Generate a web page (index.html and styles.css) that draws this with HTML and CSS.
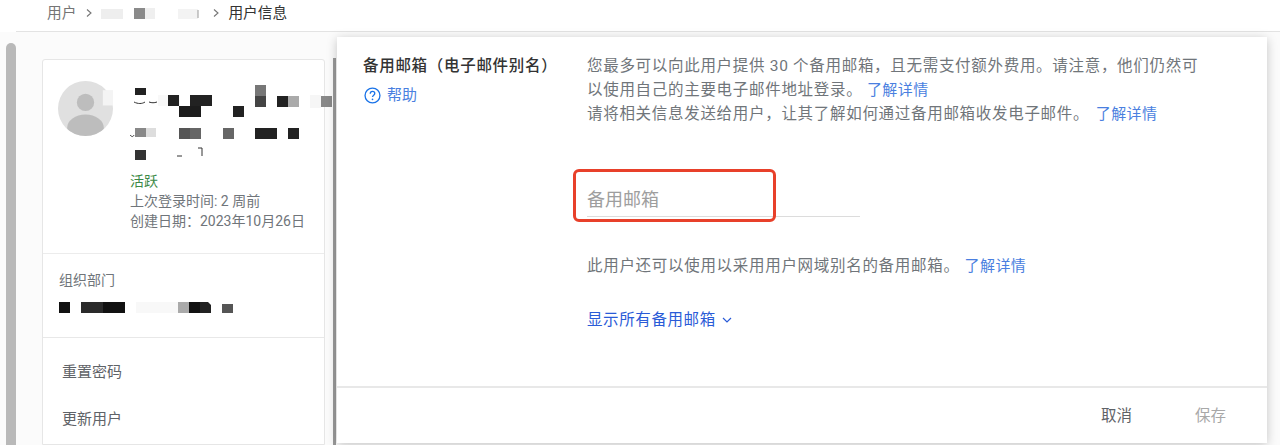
FILE: index.html
```html
<!DOCTYPE html>
<html lang="zh-CN">
<head>
<meta charset="utf-8">
<title>用户信息</title>
<link rel="stylesheet" href="styles.css">
</head>
<body>
<div class="page">
  <header class="crumbs">
    <span class="crumb">用户</span>
    <svg class="sep" viewBox="0 0 8 10"><path d="M2 1.5 6 5 2 8.5" fill="none" stroke="#757575" stroke-width="1.1"/></svg>
    <svg class="crumb-mosaic" viewBox="0 0 102 14">
      <rect x="0" y="3" width="22" height="10" fill="#eeeeee"/>
      <rect x="33" y="2" width="11" height="11" fill="#8a8a8a"/>
      <rect x="44" y="2" width="10" height="11" fill="#efefef"/>
      <rect x="77" y="3" width="20" height="10" fill="#f3f3f3"/>
      <path d="M97 4v8" stroke="#999" stroke-width="1"/>
    </svg>
    <svg class="sep" viewBox="0 0 8 10"><path d="M2 1.5 6 5 2 8.5" fill="none" stroke="#757575" stroke-width="1.1"/></svg>
    <span class="crumb current">用户信息</span>
  </header>
  <div class="content">
    <div class="scrollbar"></div>
    <aside class="card">
      <section class="identity">
        <svg class="avatar" viewBox="0 0 54 54">
          <defs><clipPath id="avatar-clip"><circle cx="27" cy="27" r="27"/></clipPath></defs>
          <circle cx="27" cy="27" r="27" fill="#e0e0e0"/>
          <g clip-path="url(#avatar-clip)">
            <circle cx="27" cy="21" r="8.5" fill="#bdbdbd"/>
            <ellipse cx="27" cy="46" rx="18" ry="13" fill="#bdbdbd"/>
          </g>
          <rect x="44" y="9" width="10" height="15" fill="#f4f4f4"/>
        </svg>
        <svg class="name-mosaic" viewBox="0 0 215 75">
          <rect x="5" y="0" width="11" height="7" fill="#222"/>
          <path d="M4 14c4 2 8 2 11 0M19 14c3 1 5 1 8 0" stroke="#333" fill="none"/>
          <rect x="28" y="7" width="22" height="11" fill="#f8f8f8"/>
          <rect x="38" y="7" width="11" height="11" fill="#222"/>
          <rect x="60" y="7" width="22" height="11" fill="#222"/>
          <rect x="49" y="18" width="22" height="11" fill="#1c1c1c"/>
          <rect x="103" y="18" width="11" height="11" fill="#222"/>
          <rect x="125" y="-3" width="11" height="11" fill="#777"/>
          <rect x="125" y="8" width="11" height="11" fill="#444"/>
          <rect x="147" y="8" width="11" height="11" fill="#222"/>
          <rect x="158" y="8" width="11" height="11" fill="#aaa"/>
          <rect x="191" y="8" width="11" height="11" fill="#888"/>
          <rect x="180" y="7" width="11" height="13" fill="#f6f6f6"/>
          <rect x="5" y="40" width="11" height="9" fill="#888"/>
          <rect x="16" y="40" width="10" height="9" fill="#ddd"/>
          <rect x="49" y="40" width="11" height="11" fill="#555"/>
          <rect x="60" y="40" width="11" height="11" fill="#666"/>
          <rect x="93" y="40" width="11" height="11" fill="#666"/>
          <rect x="125" y="40" width="22" height="11" fill="#222"/>
          <rect x="158" y="40" width="11" height="11" fill="#222"/>
          <path d="M0 47c2 2 3 2 4 0" stroke="#333" fill="none"/>
          <rect x="5" y="62" width="11" height="10" fill="#333"/>
          <path d="M47 68h5M68 60h4v8" stroke="#333" fill="none"/>
        </svg>
        <div class="status">
          <div class="active">活跃</div>
          <div>上次登录时间: 2 周前</div>
          <div>创建日期：2023年10月26日</div>
        </div>
      </section>
      <section class="org">
        <div class="org-label">组织部门</div>
        <svg class="org-mosaic" viewBox="0 0 176 12">
          <rect x="0" y="0" width="11" height="11" fill="#111"/>
          <rect x="22" y="0" width="22" height="11" fill="#2a2a2a"/>
          <rect x="44" y="0" width="22" height="11" fill="#111"/>
          <rect x="77" y="0" width="42" height="11" fill="#f8f8f8"/>
          <rect x="119" y="0" width="11" height="11" fill="#aaa"/>
          <rect x="130" y="0" width="11" height="11" fill="#111"/>
          <path d="M141 0h8l3 3v8h-11z" fill="#222"/>
          <rect x="163" y="2" width="11" height="9" fill="#555"/>
        </svg>
      </section>
      <nav class="actions">
        <div class="action">重置密码</div>
        <div class="action">更新用户</div>
      </nav>
    </aside>
    <div class="side-track"></div>
  </div>
  <main class="panel">
    <div class="panel-body">
      <div class="aside-col">
        <h1 class="panel-title">备用邮箱（电子邮件别名）</h1>
        <div class="help">
          <svg class="help-icon" viewBox="0 0 18 18"><circle cx="9" cy="9" r="7.9" fill="none" stroke="#1a73e8" stroke-width="1.4"/><path d="M6.6 7.1c0-1.4 1-2.4 2.4-2.4s2.4 1 2.4 2.2c0 1.8-2.4 1.8-2.4 3.7" fill="none" stroke="#1a73e8" stroke-width="1.4"/><circle cx="9" cy="13.1" r=".9" fill="#1a73e8"/></svg>
          <span>帮助</span>
        </div>
      </div>
      <div class="main-col">
        <p class="desc">您最多可以向此用户提供 30 个备用邮箱，且无需支付额外费用。请注意，他们仍然可以使用自己的主要电子邮件地址登录。 <a class="link">了解详情</a><br>请将相关信息发送给用户，让其了解如何通过备用邮箱收发电子邮件。 <a class="link link-offset">了解详情</a></p>
        <div class="field">
          <span class="placeholder">备用邮箱</span>
          <div class="highlight"></div>
        </div>
        <p class="note">此用户还可以使用以采用用户网域别名的备用邮箱。<a class="link note-link">了解详情</a></p>
        <a class="show-all">显示所有备用邮箱
          <svg class="chev" viewBox="0 0 10 6"><path d="M1 1l4 4 4-4" fill="none" stroke="#2a5bd7" stroke-width="1.2"/></svg>
        </a>
      </div>
    </div>
    <footer class="panel-footer">
      <button class="btn">取消</button>
      <button class="btn disabled">保存</button>
    </footer>
  </main>
</div>
</body>
</html>
```

FILE: styles.css
```css
* { box-sizing: border-box; }
html, body { margin: 0; padding: 0; }
body {
  width: 1280px;
  height: 445px;
  overflow: hidden;
  background: #fff;
  font-family: Roboto, "Noto Sans CJK SC", "Liberation Sans", sans-serif;
  color: #5f6368;
}
.page { position: relative; width: 1280px; height: 445px; overflow: hidden; }

.crumbs {
  height: 32px;
  margin-left: 16px;
  padding: 0 0 5px 31px;
  display: flex;
  align-items: center;
  border-bottom: 1px solid #e3e3e3;
  font-size: 14.7px;
  line-height: 24px;
}
.crumb { color: #757575; }
.crumb.current { color: #333; }
.sep { width: 8px; height: 10px; margin: 0 8px 0 9px; flex: none; }
.crumbs .sep:nth-of-type(2) { margin: 0 8px 0 5px; }
.crumb-mosaic { width: 102px; height: 14px; flex: none; }

.content {
  height: 413px;
  padding-left: 6px;
  display: flex;
  background: #fbfbfb;
}
.scrollbar {
  width: 10px;
  margin-top: 11px;
  border-radius: 5px 5px 0 0;
  background: #b9b9b9;
  flex: none;
}
.card {
  width: 283px;
  margin: 27px 0 0 26px;
  background: #fff;
  border: 1px solid #e6e6e6;
  border-radius: 3px 3px 0 0;
  flex: none;
}
.identity {
  position: relative;
  height: 194px;
  padding: 21px 0 0 15px;
  border-bottom: 1px solid #ececec;
}
.avatar { display: block; width: 55px; height: 55px; }
.name-mosaic {
  position: absolute;
  left: 87px;
  top: 28px;
  width: 215px;
  height: 75px;
  overflow: visible;
}
.status {
  position: absolute;
  left: 87px;
  top: 111px;
  font-size: 14px;
  line-height: 20px;
  color: #70757a;
  white-space: nowrap;
}
.active { color: #3c8a47; }
.org {
  height: 84px;
  padding: 15px 0 0 16px;
  border-bottom: 1px solid #e8e8e8;
}
.org-label { font-size: 14px; line-height: 22px; color: #70757a; }
.org-mosaic { display: block; width: 176px; height: 12px; margin-top: 11px; }
.actions { padding: 22px 0 0 19px; }
.action {
  height: 47px;
  font-size: 15px;
  line-height: 24px;
  color: #5f6368;
}
.side-track {
  width: 3px;
  margin: 26px 0 0 8px;
  background: #9a9a9a;
  flex: none;
}

.panel {
  position: absolute;
  left: 337px;
  top: 37px;
  width: 930px;
  height: 406px;
  display: flex;
  flex-direction: column;
  background: #fff;
  box-shadow: 0 2px 10px rgba(0, 0, 0, .22);
}
.panel-body {
  flex: 1;
  display: flex;
  padding: 17px 0 0 26px;
}
.aside-col { width: 224px; flex: none; }
.panel-title {
  margin: 0;
  font-size: 15.5px;
  font-weight: 500;
  letter-spacing: .7px;
  line-height: 24px;
  color: #333;
  white-space: nowrap;
}
.help {
  display: flex;
  align-items: center;
  gap: 6px;
  margin-top: 7px;
  margin-left: 1px;
  font-size: 15px;
  line-height: 20px;
  color: #4a7fe0;
}
.help-icon { width: 17px; height: 17px; flex: none; }
.main-col { width: 620px; flex: none; }
.desc {
  margin: 0;
  font-size: 15.5px;
  letter-spacing: .7px;
  line-height: 24px;
  color: #70757a;
}
.link { color: #4a7fe0; font-size: 15px; letter-spacing: .4px; }
.link-offset { margin-left: 2px; }
.field {
  position: relative;
  width: 273px;
  height: 34px;
  margin-top: 57px;
  padding-top: 3px;
  border-bottom: 1px solid #dcdcdc;
  font-size: 18px;
  line-height: 28px;
  color: #9e9e9e;
}
.highlight {
  position: absolute;
  left: -14px;
  top: -14px;
  width: 203px;
  height: 53px;
  border: 3px solid #e8402a;
  border-radius: 6px;
}
.note {
  margin: 37px 0 0;
  font-size: 15.5px;
  letter-spacing: .7px;
  line-height: 24px;
  color: #70757a;
}
.note-link { margin-left: 5px; }
.show-all {
  display: inline-flex;
  align-items: center;
  gap: 6px;
  margin-top: 30px;
  font-size: 15.5px;
  letter-spacing: .6px;
  line-height: 24px;
  color: #2a5bd7;
}
.chev { width: 10px; height: 6px; }
.panel-footer {
  height: 57px;
  display: flex;
  justify-content: flex-end;
  gap: 63px;
  padding: 15px 41px 0 0;
  border-top: 2px solid #e8e8e8;
}
.btn {
  padding: 0;
  height: 26px;
  border: 0;
  background: none;
  font: inherit;
  font-size: 15.5px;
  line-height: 26px;
  color: #5f6368;
}
.btn.disabled { color: #a8a8a8; }
```
